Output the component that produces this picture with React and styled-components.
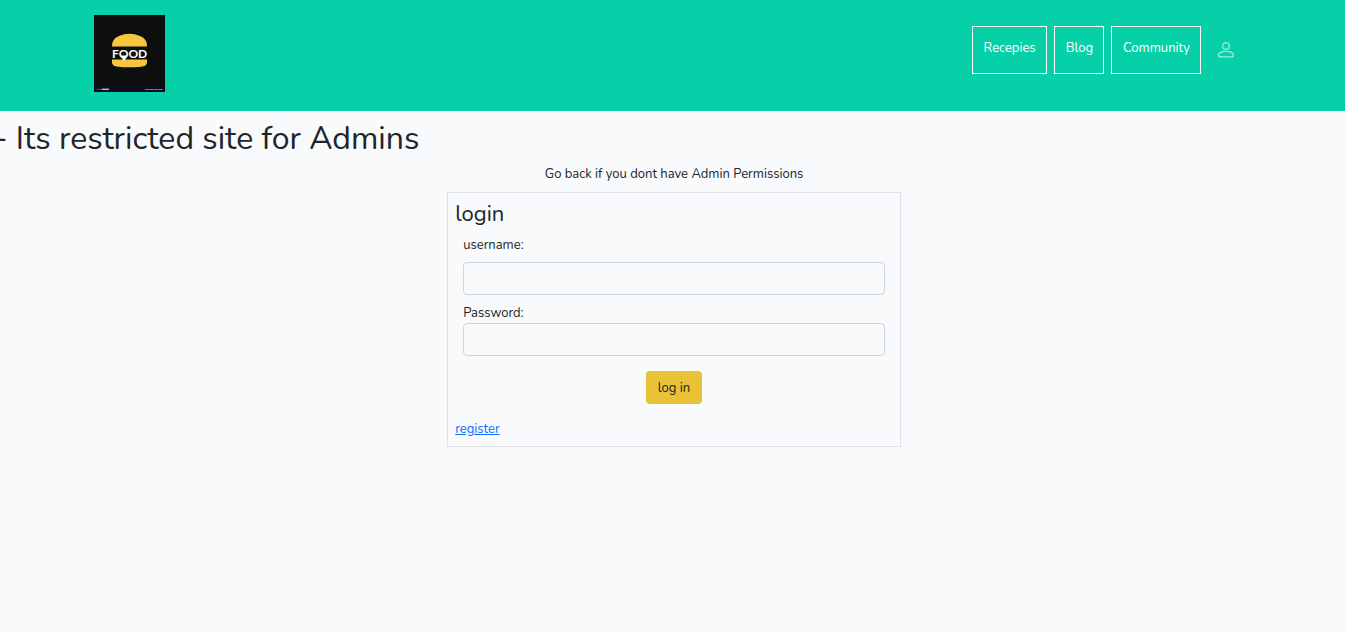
import React from 'react';
import styled, { createGlobalStyle } from 'styled-components';

const GlobalStyle = createGlobalStyle`
  *, *::before, *::after { box-sizing: border-box; }
  body {
    margin: 0;
    background: #f8fafc;
    color: #212529;
    font-family: Nunito, Lato, sans-serif;
    font-size: 13px;
    line-height: 20px;
  }
  h1, h2, p { margin: 0; font-weight: 400; }
`;

const Header = styled.header`
  display: flex;
  align-items: flex-start;
  justify-content: space-between;
  padding: 15px 7% 19px;
  background: #05d0a7;
`;

const LogoLink = styled.a`
  display: block;
  svg { display: block; width: 71px; height: 77px; }
`;

const Nav = styled.nav`
  display: flex;
  align-items: center;
  gap: 7px;
  padding: 11px 17px 0 0;
`;

const NavLink = styled.a`
  height: 48px;
  padding: 11px 10px 11px 11px;
  border: 1px solid #fff;
  color: #fff;
  text-decoration: none;
`;

const ProfileLink = styled.a`
  margin-left: 10px;
  color: #fff;
  opacity: 0.6;
  svg { display: block; width: 16px; height: 16px; }
`;

const Ticker = styled.div`
  overflow: hidden;
  white-space: nowrap;
`;

const Title = styled.h1`
  padding: 8px 0;
  text-indent: -6px;
  font-size: 32px;
  line-height: 39px;
`;

const Main = styled.main`
  display: flex;
  flex-direction: column;
  align-items: center;
  padding-left: 3px;
`;

const Notice = styled.p`
  padding-bottom: 8px;
  margin-top: -2px;
`;

const Card = styled.section`
  width: 33.8%;
  min-width: 280px;
  padding: 7px;
  border: 1px solid #dee2e6;
`;

const CardTitle = styled.h2`
  font-size: 22px;
  line-height: 28px;
`;

const Form = styled.form`
  display: flex;
  flex-direction: column;
  padding: 7px 8px 15px;
`;

const Label = styled.label`
  margin-bottom: ${(p) => (p.$spaced ? '7px' : '0')};
`;

const Input = styled.input`
  width: 100%;
  height: 33px;
  margin-bottom: ${(p) => (p.$last ? '15px' : '8px')};
  padding: 5px 11px;
  border: 1px solid #ced4da;
  border-radius: 4px;
  background: transparent;
  color: inherit;
  font: inherit;
`;

const Button = styled.button`
  align-self: center;
  height: 33px;
  padding: 1px 12px 0;
  border: 0;
  border-radius: 4px;
  background: #e9c235;
  color: inherit;
  font: inherit;
  cursor: pointer;
`;

const RegisterLink = styled.a`
  display: inline-block;
  color: #0d6efd;
`;

function Logo() {
  return (
    <svg viewBox="0 0 71 77" role="img" aria-label="Food">
      <rect width="71" height="77" fill="#0c0f0e" />
      <path d="M18 31.5 Q17.5 24 25 21 Q35.5 16.5 46 21 Q53.5 24 53 31.5 Z" fill="#f8c63d" />
      <path d="M18 44.5 H53 V47.5 Q53 51 47 51.7 Q35.5 53 24 51.7 Q18 51 18 47.5 Z" fill="#f8c63d" />
      <path d="M26 40.5 L30 46 L34 40.5 Z" fill="#fff" />
      <text x="18" y="42.5" fill="#fff" fontFamily="Lato, sans-serif" fontWeight="700" fontSize="12">FOOD</text>
      <rect y="71.5" width="71" height="5.5" fill="#0d0c20" />
      <path d="M2.5 74.3 H8" stroke="#555866" strokeWidth="1" />
      <path d="M8 74.3 H15" stroke="#b5b6bc" strokeWidth="1.5" />
      <path d="M51 74.5 H69" stroke="#80828c" strokeWidth="1" strokeDasharray="4 .4" />
    </svg>
  );
}

function PersonIcon() {
  return (
    <svg viewBox="0 0 16 16" fill="none" stroke="currentColor" strokeWidth="1.3" aria-hidden="true">
      <circle cx="8" cy="4" r="3.4" />
      <path d="M.6 13.6 C.6 11 3.4 9.4 8 9.4 S15.4 11 15.4 13.6 Q15.4 14.8 14 14.8 H2 Q.6 14.8 .6 13.6 Z" />
    </svg>
  );
}

export default function App() {
  return (
    <>
      <GlobalStyle />
      <Header>
        <LogoLink href="#home"><Logo /></LogoLink>
        <Nav>
          <NavLink href="#recepies">Recepies</NavLink>
          <NavLink href="#blog">Blog</NavLink>
          <NavLink href="#community">Community</NavLink>
          <ProfileLink href="#profile" aria-label="Profile"><PersonIcon /></ProfileLink>
        </Nav>
      </Header>
      <Ticker><Title>- Its restricted site for Admins</Title></Ticker>
      <Main>
        <Notice>Go back if you dont have Admin Permissions</Notice>
        <Card>
          <CardTitle>login</CardTitle>
          <Form onSubmit={(e) => e.preventDefault()}>
            <Label htmlFor="username" $spaced>username:</Label>
            <Input id="username" type="text" />
            <Label htmlFor="password">Password:</Label>
            <Input id="password" type="password" $last />
            <Button type="submit">log in</Button>
          </Form>
          <RegisterLink href="#register">register</RegisterLink>
        </Card>
      </Main>
    </>
  );
}
